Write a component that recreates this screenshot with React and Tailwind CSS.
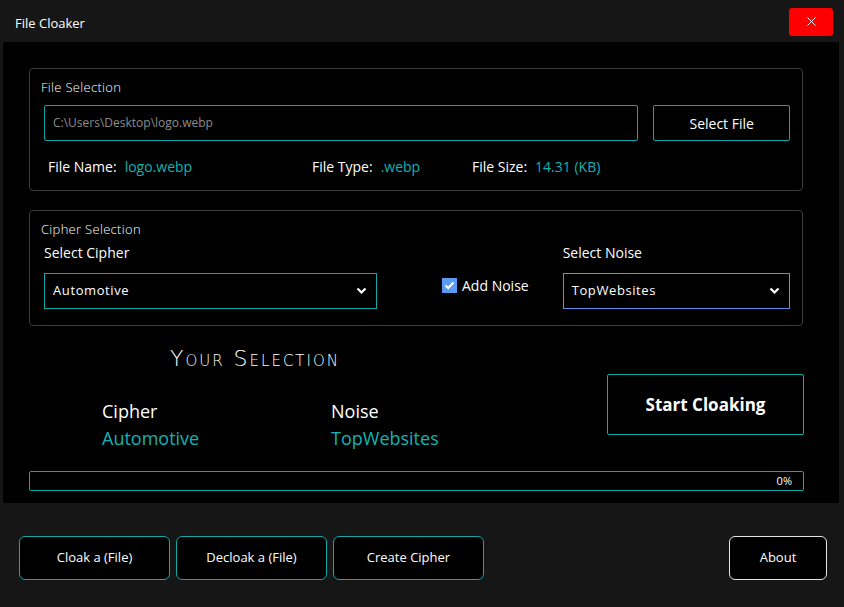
import { X } from "lucide-react";

const teal = "border-[#0fa9a9]";

function Chevron() {
  return (
    <svg width="11" height="8" viewBox="0 0 11 8" className="shrink-0">
      <polyline points="1.5,1.5 5.5,5.5 9.5,1.5" fill="none" stroke="#fff" strokeWidth="2.2" />
    </svg>
  );
}

function Dropdown({ value, border }) {
  return (
    <div className={`flex items-center justify-between h-[36px] border ${border} pl-[8px] pr-[9px] text-[13px] text-white tracking-[0.6px]`}>
      <span>{value}</span>
      <Chevron />
    </div>
  );
}

function InfoItem({ label, value, width }) {
  return (
    <div className={`flex items-center gap-[8px] ${width}`}>
      <span className="text-white">{label}</span>
      <span className="text-[#12b3b3]">{value}</span>
    </div>
  );
}

export default function App() {
  return (
    <div
      className="w-[844px] h-[607px] bg-[#161616] flex flex-col overflow-hidden select-none"
      style={{ fontFamily: '"Open Sans", "Noto Sans", sans-serif' }}
    >
      {/* Title bar */}
      <div className="h-[42px] flex items-center justify-between pl-[15px] pr-[11px] shrink-0">
        <span className="text-[13px] text-white mt-[5px]">File Cloaker</span>
        <button className="w-[44px] h-[28px] bg-[#ff0000] rounded-[3px] flex items-center justify-center mt-[1px]">
          <X className="w-[15px] h-[15px] text-white" strokeWidth={1.5} />
        </button>
      </div>

      {/* Main */}
      <div className="ml-[3px] mr-[5px] h-[461px] bg-black pt-[26px] px-[26px] flex flex-col">
        {/* File selection */}
        <div className="h-[123px] w-[774px] border border-[#3c3c3c] rounded-[4px] pl-[11px] pr-[12px] pt-[9px] flex flex-col">
          <span className="text-[13px] font-light text-white tracking-[0.3px] leading-[18px]">File Selection</span>
          <div className="flex items-center mt-[9px] pl-[3px] gap-[15px]">
            <div className={`w-[596px] h-[36px] border ${teal} rounded-[2px] flex items-center pl-[8px] text-[12px] text-[#8c8c8c]`}>
              C:\Users\Desktop\logo.webp
            </div>
            <button className={`w-[137px] h-[36px] border ${teal} rounded-[2px] text-[14px] text-white`}>
              Select File
            </button>
          </div>
          <div className="flex items-center mt-[15px] pl-[7px] text-[14px]">
            <InfoItem label="File Name:" value="logo.webp" width="w-[264px]" />
            <InfoItem label="File Type:" value=".webp" width="w-[160px]" />
            <InfoItem label="File Size:" value="14.31 (KB)" width="" />
          </div>
        </div>

        {/* Cipher selection */}
        <div className="h-[116px] w-[774px] border border-[#3c3c3c] rounded-[4px] pl-[11px] pr-[12px] pt-[9px] mt-[19px] flex flex-col">
          <span className="text-[13px] font-light text-white tracking-[0.3px] leading-[18px]">Cipher Selection</span>
          <div className="flex items-end pl-[3px] mt-[1px]">
            <div className="w-[334px] flex flex-col">
              <span className="text-[14px] text-white leading-[20px] mt-[4px]">Select Cipher</span>
              <div className="mt-[10px]">
                <Dropdown value="Automotive" border={teal} />
              </div>
            </div>
            <div className="w-[186px] h-[36px] flex items-start pl-[65px] pt-[2px]">
              <div className="flex items-center gap-[5px]">
                <div className="w-[15px] h-[15px] bg-[#5a9af2] flex items-center justify-center">
                  <svg width="11" height="9" viewBox="0 0 11 9">
                    <polyline points="1.5,4.5 4.2,7 9.5,1.5" fill="none" stroke="#fff" strokeWidth="2" />
                  </svg>
                </div>
                <span className="text-[14px] text-white">Add Noise</span>
              </div>
            </div>
            <div className="w-[228px] flex flex-col">
              <span className="text-[14px] text-white leading-[20px]">Select Noise</span>
              <div className="mt-[10px]">
                <Dropdown value="TopWebsites" border="border-[#5a8ee8]" />
              </div>
            </div>
          </div>
        </div>

        {/* Your selection + start */}
        <div className="flex h-[145px]">
          <div className="w-[578px] flex flex-col">
            <div
              className="text-white text-[22px] font-light text-center w-[452px] mt-[20px] leading-[26px] tracking-[2px]"
              style={{ fontVariant: "small-caps", fontFamily: '"DejaVu Sans", sans-serif' }}
            >
              Your Selection
            </div>
            <div className="flex pl-[73px] mt-[26px] text-[18px] leading-[27px]">
              <div className="w-[229px] flex flex-col">
                <span className="text-white">Cipher</span>
                <span className="text-[#12b3b3]">Automotive</span>
              </div>
              <div className="flex flex-col">
                <span className="text-white">Noise</span>
                <span className="text-[#12b3b3]">TopWebsites</span>
              </div>
            </div>
          </div>
          <button
            className={`w-[197px] h-[61px] mt-[48px] border ${teal} rounded-[2px] text-[17px] font-bold text-white`}
          >
            Start Cloaking
          </button>
        </div>

        {/* Progress */}
        <div className={`w-[775px] h-[20px] border ${teal} rounded-[2px] flex items-center justify-end pr-[11px] text-[11px] text-white`}>
          0%
        </div>
      </div>

      {/* Bottom bar */}
      <div className="flex items-center pl-[19px] pr-[17px] pt-[33px] text-[13px] text-white">
        <button className={`w-[151px] h-[44px] bg-black border ${teal} rounded-[6px]`}>Cloak a (File)</button>
        <button className={`w-[151px] h-[44px] bg-black border ${teal} rounded-[6px] ml-[6px]`}>Decloak a (File)</button>
        <button className={`w-[151px] h-[44px] bg-black border ${teal} rounded-[6px] ml-[6px]`}>Create Cipher</button>
        <button className="w-[98px] h-[44px] bg-black border border-[#e6e6e6] rounded-[6px] ml-auto">About</button>
      </div>
    </div>
  );
}
